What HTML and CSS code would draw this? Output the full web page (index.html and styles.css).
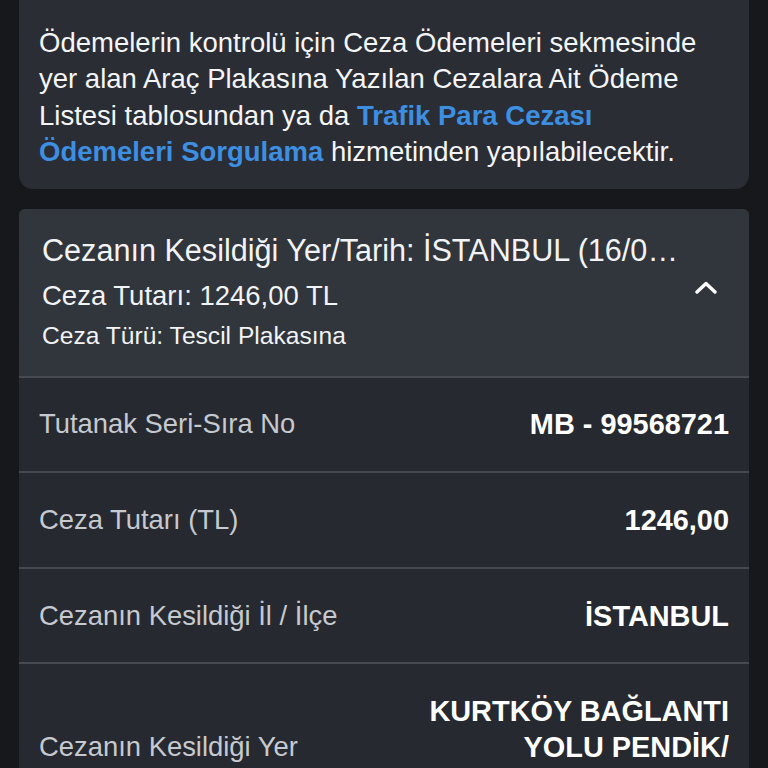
FILE: index.html
```html
<!DOCTYPE html>
<html lang="tr">
<head>
<meta charset="utf-8">
<title>Ceza Ödemeleri</title>
<link rel="stylesheet" href="styles.css">
</head>
<body>
<div class="page">
  <section class="info-card">
    <p class="info-text">Ödemelerin kontrolü için Ceza Ödemeleri sekmesinde yer alan Araç Plakasına Yazılan Cezalara Ait Ödeme Listesi tablosundan ya da <a class="link" href="#">Trafik Para Cezası Ödemeleri Sorgulama</a> hizmetinden yapılabilecektir.</p>
  </section>

  <section class="accordion">
    <div class="acc-header">
      <div class="acc-texts">
        <div class="acc-title">Cezanın Kesildiği Yer/Tarih: İSTANBUL (16/08/2023 14:25)</div>
        <div class="acc-sub">Ceza Tutarı: 1246,00 TL</div>
        <div class="acc-type">Ceza Türü: Tescil Plakasına</div>
      </div>
      <svg class="chevron" width="24" height="14" viewBox="0 0 24 14" aria-hidden="true">
        <path d="M3 12 L12 3.5 L21 12" fill="none" stroke="#ffffff" stroke-width="3.4" stroke-linecap="round" stroke-linejoin="round"/>
      </svg>
    </div>
    <div class="row">
      <div class="label">Tutanak Seri-Sıra No</div>
      <div class="value">MB - 99568721</div>
    </div>
    <div class="row">
      <div class="label">Ceza Tutarı (TL)</div>
      <div class="value">1246,00</div>
    </div>
    <div class="row">
      <div class="label">Cezanın Kesildiği İl / İlçe</div>
      <div class="value">İSTANBUL</div>
    </div>
    <div class="row">
      <div class="label">Cezanın Kesildiği Yer</div>
      <div class="value">KURTKÖY BAĞLANTI YOLU PENDİK/<wbr>İSTANBUL</div>
    </div>
  </section>
</div>
</body>
</html>
```

FILE: styles.css
```css
html, body {
  margin: 0;
  padding: 0;
  background: #17181c;
}

body {
  font-family: "Liberation Sans", Arial, sans-serif;
  color: #f2f3f5;
  overflow: hidden;
}

.page {
  display: flex;
  flex-direction: column;
  gap: 20px;
  padding: 0 19px;
}

.info-card {
  background: #2a2d34;
  border-radius: 0 0 14px 14px;
  padding: 25px 20px 18px 20px;
}

.info-text {
  margin: 0;
  font-size: 27.5px;
  line-height: 36.4px;
  color: #f4f5f7;
}

.link {
  color: #3d8fe2;
  font-weight: bold;
  text-decoration: none;
}

.accordion {
  background: #262a30;
  border-radius: 6px 6px 0 0;
  overflow: hidden;
}

.acc-header {
  display: flex;
  align-items: center;
  gap: 14px;
  background: #31353c;
  padding: 21px 31px 24px 23px;
}

.acc-texts {
  flex: 1;
  min-width: 0;
  display: flex;
  flex-direction: column;
}

.acc-title {
  font-size: 30.6px;
  line-height: 40px;
  white-space: nowrap;
  overflow: hidden;
  text-overflow: ellipsis;
  margin-bottom: 8px;
}

.acc-sub {
  font-size: 27.5px;
  line-height: 36px;
  margin-bottom: 6px;
}

.acc-type {
  font-size: 24.6px;
  line-height: 32px;
}

.chevron {
  flex: none;
  margin-top: -8px;
}

.row {
  display: flex;
  align-items: center;
  justify-content: space-between;
  gap: 24px;
  border-top: 2px solid #454950;
  padding: 28.8px 20px;
}

.label {
  font-size: 27.4px;
  line-height: 36px;
  color: #c6c9cf;
}

.value {
  max-width: 320px;
  text-align: right;
  font-size: 28.9px;
  line-height: 36px;
  font-weight: bold;
  color: #ffffff;
}
```
